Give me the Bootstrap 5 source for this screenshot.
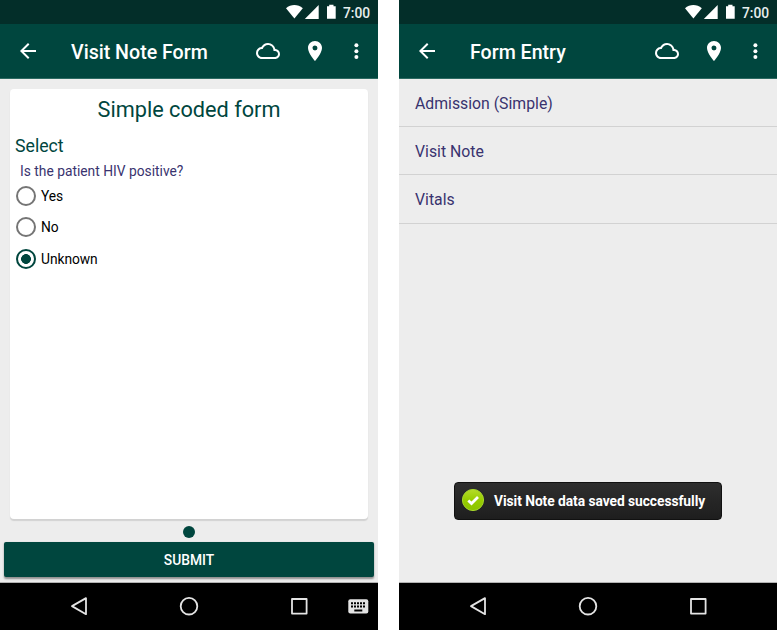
<!DOCTYPE html>
<html lang="en">
<head>
<meta charset="utf-8">
<meta name="viewport" content="width=device-width, initial-scale=1">
<title>Visit Note Form</title>
<link rel="stylesheet" href="https://cdn.jsdelivr.net/npm/bootstrap@5.3.0/dist/css/bootstrap.min.css">
<style>
body{font-family:Roboto,sans-serif;background:#fff;width:777px;height:630px;overflow:hidden;line-height:1}
svg{display:block;flex:none}
.phone{width:378px;height:630px;background:#ededed}
.statusbar{height:24px;background:#032e29;color:#fff;padding:0 8px 0 0;font-size:13.8px;font-weight:500}
.appbar{height:55px;background:#00463e;color:#fff;border-bottom:1px solid #2c6a62;padding-left:16px;padding-right:10px}
.appbar h1{font-size:19.6px;font-weight:500;line-height:24px;margin:3px 0 0 31px}
.clock{width:27px;line-height:22px;margin:1px 0 0 5px;white-space:nowrap;color:#e9efee}
.sheet{margin:10px 10px 0 10px;width:358px;height:430px;background:#fff;border-radius:4px;box-shadow:0 1.5px 1px #d2d2d2;padding:7px 5px 0}
.sheet h2{font-size:21.7px;font-weight:400;color:#00463e;line-height:28px;margin:0 0 10px}
.sheet h3{font-size:17.7px;font-weight:400;color:#00463e;line-height:24px;margin:0}
.question{font-size:13.8px;color:#39336f;line-height:20px;margin:3px 0 0 5px}
.choices{margin-top:-1px}
.choice{height:31.5px;font-size:13.8px;letter-spacing:-.05px;color:#000;line-height:20px}
.choice input{appearance:none;width:20px;height:20px;margin:0 5.5px 0 .5px;border:2px solid #757575;border-radius:50%;background:#fff;flex:none}
.choice input:checked{border-color:#00463e;background:radial-gradient(circle,#00463e 4.6px,#fff 5.2px)}
.question{margin-bottom:0}
.pagedot{width:12px;height:12px;border-radius:50%;background:#00463e;margin-top:6.5px}
.submit{margin:4px 4px 0;height:35px;width:370px;background:#00463e;color:#fff;font-size:13.8px;font-weight:500;border:0;border-radius:2px;box-shadow:0 1.5px 2px rgba(0,0,0,.4);padding:1px 0 0;line-height:34px}
.navkeys{height:48px;background:#000;border-top:1px solid #b2b2b2}
.entry{height:48.2px;padding:2px 16px 0;background:none;color:#39336f;font-size:15.8px;line-height:20px}
.list-group-flush>.entry.list-group-item{border-width:0 0 1.4px;border-color:#d2d2d2}
.note{width:268.5px;height:38px;margin:0 0 62px 54.5px;border:1px solid #111;border-radius:4px;background:linear-gradient(#2e2e2e,#1e1e1e);color:#fff;font-size:13.8px;letter-spacing:-.05px;font-weight:700;padding:0 0 0 6px;white-space:nowrap}
.note svg{margin-bottom:2px}
.note-text{margin:2px 0 0 9.5px}
</style>
<script src="https://cdn.jsdelivr.net/npm/bootstrap@5.3.0/dist/js/bootstrap.bundle.min.js"></script>
</head>
<body>
<svg width="0" height="0" class="position-absolute" aria-hidden="true">
<symbol id="back" viewBox="0 0 24 24"><path fill="#fff" d="M20 11H7.83l5.59-5.59L12 4l-8 8 8 8 1.41-1.41L7.83 13H20z"/></symbol>
<symbol id="cloud" viewBox="0 0 24 24"><path fill="#fff" d="M19.35 10.04A7.49 7.49 0 0 0 12 4C9.11 4 6.6 5.64 5.35 8.04A5.994 5.994 0 0 0 0 14c0 3.31 2.69 6 6 6h13c2.76 0 5-2.24 5-5 0-2.64-2.05-4.78-4.65-4.96zM19 18H6c-2.21 0-4-1.79-4-4s1.79-4 4-4h.71C7.37 7.69 9.48 6 12 6c3.04 0 5.5 2.46 5.5 5.5v.5H19c1.66 0 3 1.34 3 3s-1.34 3-3 3z"/></symbol>
<symbol id="pin" viewBox="0 0 24 24"><path fill="#fff" d="M12 2C8.13 2 5 5.13 5 9c0 5.25 7 13 7 13s7-7.75 7-13c0-3.87-3.13-7-7-7zm0 9.5a2.5 2.5 0 0 1 0-5 2.5 2.5 0 0 1 0 5z"/></symbol>
<symbol id="more" viewBox="0 0 24 24"><g fill="#fff"><circle cx="12.4" cy="6.2" r="2"/><circle cx="12.4" cy="12.2" r="2"/><circle cx="12.4" cy="18" r="2"/></g></symbol>
<symbol id="signals" viewBox="0 0 52 16"><g fill="#fff"><path d="M0 4.200C4.800-.2 12-.2 16.800 4.200L8.400 14.600z"/><path d="M32.700 .9V14.900H18.800z"/><path d="M41 2.200h2.200V.7h4.300v1.500h2.200V14.700H41z"/></g></symbol>
<symbol id="keys" viewBox="0 0 378 46"><g fill="none" stroke="#e4e4e4" stroke-width="1.800" stroke-linejoin="round"><path d="M86 15.100V31.200L72 23.150z"/><circle cx="189" cy="23.200" r="8.300"/><path d="M292 16h14.600v14.600H292z"/></g></symbol>
</svg>
<main class="d-flex justify-content-between">
<section class="phone d-flex flex-column">
  <div class="statusbar d-flex align-items-center justify-content-end"><svg width="52" height="16"><use href="#signals"/></svg><span class="clock">7:00</span></div>
  <header class="appbar d-flex align-items-center">
    <svg width="24" height="24"><use href="#back"/></svg><h1>Visit Note Form</h1>
    <div class="d-flex ms-auto"><svg width="24" height="24"><use href="#cloud"/></svg><svg width="24" height="24" style="margin-left:23px"><use href="#pin"/></svg><svg width="24" height="24" style="margin-left:17px"><use href="#more"/></svg></div>
  </header>
  <form class="sheet">
    <h2 class="text-center">Simple coded form</h2>
    <h3>Select</h3>
    <p class="question">Is the patient HIV positive?</p>
    <div class="choices">
      <label class="choice d-flex align-items-center"><input type="radio" name="hiv">Yes</label>
      <label class="choice d-flex align-items-center"><input type="radio" name="hiv">No</label>
      <label class="choice d-flex align-items-center"><input type="radio" name="hiv" checked>Unknown</label>
    </div>
  </form>
  <span class="pagedot align-self-center"></span>
  <button class="submit">SUBMIT</button>
  <footer class="navkeys d-flex mt-auto position-relative">
    <svg width="378" height="46"><use href="#keys"/></svg>
    <svg class="position-absolute top-0 end-0" width="36" height="46" viewBox="342 0 36 46"><rect x="348.300" y="16.200" width="20" height="14.400" rx="2" fill="#e4e4e4"/><g stroke="#000" stroke-width="2"><path stroke-dasharray="2 1" d="M351 20.200h14.500M351 23.600h14.500"/><path d="M354.300 27.500h8"/></g></svg>
  </footer>
</section>
<section class="phone d-flex flex-column">
  <div class="statusbar d-flex align-items-center justify-content-end"><svg width="52" height="16"><use href="#signals"/></svg><span class="clock">7:00</span></div>
  <header class="appbar d-flex align-items-center">
    <svg width="24" height="24"><use href="#back"/></svg><h1>Form Entry</h1>
    <div class="d-flex ms-auto"><svg width="24" height="24"><use href="#cloud"/></svg><svg width="24" height="24" style="margin-left:23px"><use href="#pin"/></svg><svg width="24" height="24" style="margin-left:17px"><use href="#more"/></svg></div>
  </header>
  <div class="list-group list-group-flush">
    <div class="entry list-group-item d-flex align-items-center">Admission (Simple)</div>
    <div class="entry list-group-item d-flex align-items-center">Visit Note</div>
    <div class="entry list-group-item d-flex align-items-center">Vitals</div>
  </div>
  <div class="note d-flex align-items-center mt-auto" role="status">
    <svg width="24" height="24" viewBox="0 0 24 24"><defs><linearGradient id="lime" x2="0" y2="1"><stop stop-color="#b5dc2a"/><stop offset=".5" stop-color="#97cc00"/><stop offset="1" stop-color="#8bc400"/></linearGradient></defs><circle cx="12" cy="12" r="10.600" fill="url(#lime)" stroke="#a5d42c" stroke-width="1"/><path d="M7.300 12.500l3.200 3L17 9" fill="none" stroke="#fff" stroke-width="2.800"/></svg>
    <span class="note-text">Visit Note data saved successfully</span>
  </div>
  <footer class="navkeys"><svg width="378" height="46"><use href="#keys"/></svg></footer>
</section>
</main>
</body>
</html>
